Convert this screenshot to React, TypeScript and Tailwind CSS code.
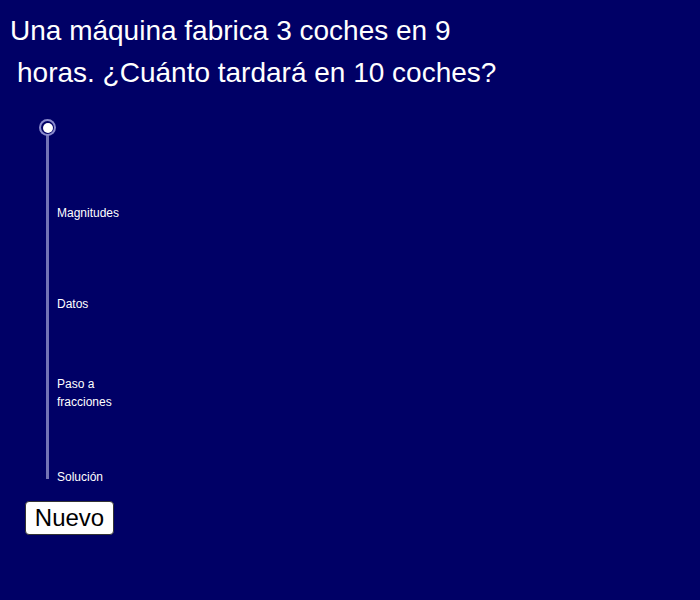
import { useState } from 'react';

const STEPS = ['Magnitudes', 'Datos', 'Paso a fracciones', 'Solución'];

export default function App() {
  const [step, setStep] = useState(0);

  return (
    <div className="w-[700px] h-[600px] bg-[#000066] text-white font-['Liberation_Sans',Arial,sans-serif] overflow-hidden">
      {/* Question */}
      <div className="pt-[10px] pl-[10px] text-[28px] leading-[42px]">
        <p>Una máquina fabrica 3 coches en 9</p>
        <p className="pl-[7px]">horas. ¿Cuánto tardará en 10 coches?</p>
      </div>

      {/* Step slider */}
      <div className="flex mt-[25px] ml-[39px]">
        <div className="relative w-[17px] flex flex-col items-center">
          <button
            onClick={() => setStep(0)}
            className="relative z-10 w-[17px] h-[17px] rounded-full bg-[#8a8acc] flex items-center justify-center"
          >
            <span className="w-[13px] h-[13px] rounded-full bg-[#000066] flex items-center justify-center">
              <span className="w-[10px] h-[10px] rounded-full bg-white" />
            </span>
          </button>
          <div className="w-[3px] h-[344px] -mt-[1px] bg-[#7373b5]" />
        </div>
        <div className="flex flex-col pl-[1px] text-[12px] leading-[18px]">
          <button onClick={() => setStep(0)} className="text-left mt-[85px] w-[80px]">{STEPS[0]}</button>
          <button onClick={() => setStep(1)} className="text-left mt-[73px] w-[80px]">{STEPS[1]}</button>
          <button onClick={() => setStep(2)} className="text-left mt-[62px] w-[80px]">
            Paso a<br />fracciones
          </button>
          <button onClick={() => setStep(3)} className="text-left mt-[57px] w-[80px]">{STEPS[3]}</button>
        </div>
      </div>

      <div className="mt-[15px] ml-[25px]">
        <button
          onClick={() => setStep(0)}
          data-step={step}
          className="w-[89px] h-[34px] bg-white text-black text-[24px] leading-none rounded-[4px] border border-[#333]"
        >
          Nuevo
        </button>
      </div>
    </div>
  );
}
